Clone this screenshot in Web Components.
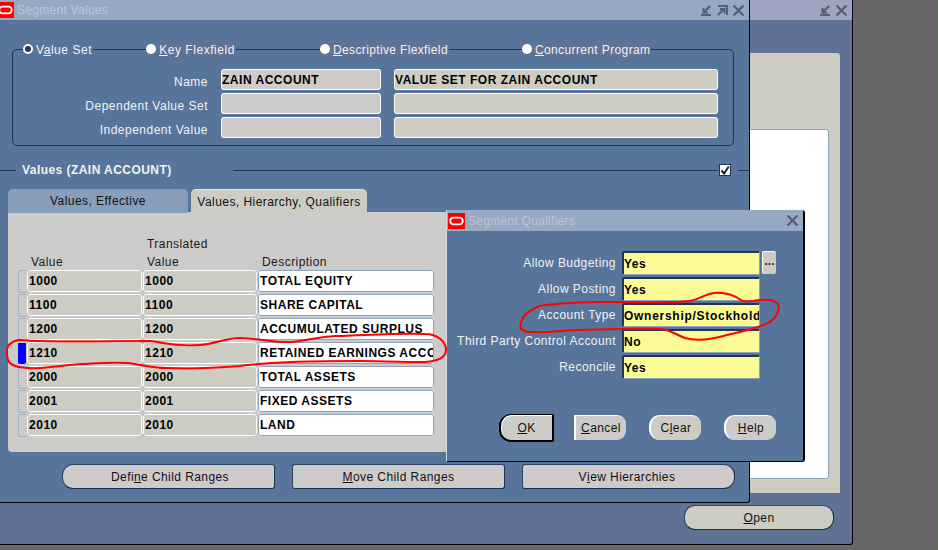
<!DOCTYPE html>
<html>
<head>
<meta charset="utf-8">
<title>Segment Values</title>
<style>
:root {
  --d-blue: repeating-conic-gradient(#557398 0 25%, #647496 0 50%) 0 0 / 2px 2px;
  --d-gray: repeating-conic-gradient(#cfcfc6 0 25%, #cac9c8 0 50%) 0 0 / 2px 2px;
  --d-title: repeating-conic-gradient(#98aac4 0 25%, #a0a3c0 0 50%) 0 0 / 2px 2px;
  --d-desk: repeating-conic-gradient(#646c62 0 25%, #666466 0 50%) 0 0 / 2px 2px;
  --d-tab: repeating-conic-gradient(#8a9fba 0 25%, #909ab8 0 50%) 0 0 / 2px 2px;
}
html, body { margin: 0; padding: 0; }
body { font: 12px "Liberation Sans", Arial, sans-serif; overflow: hidden; }
u { text-underline-offset: 1px; }
</style>
</head>
<body>
<x-desktop>
  <x-window style="left:-10px;top:0;width:863px;height:545px" closable="min,close">
    <x-back-content></x-back-content>
  </x-window>
  <x-window style="left:-3px;top:0;width:753px;height:503px" heading="Segment Values" closable="min,max,close">
    <x-segment-form></x-segment-form>
  </x-window>
  <x-window style="left:446px;top:210px;width:359px;height:252px" heading="Segment Qualifiers" closable="close" dialog>
    <x-qualifiers></x-qualifiers>
  </x-window>
  <x-ink></x-ink>
</x-desktop>

<script>
// small helper, every element just stamps its own template
function tpl (html) {
  const t = document.createElement('template');
  t.innerHTML = html;
  return t;
}

class Base extends HTMLElement {
  constructor () {
    super();
    this.attachShadow({mode: 'open'});
    this.shadowRoot.appendChild(this.constructor.template.content.cloneNode(true));
  }
}

class XDesktop extends Base {
  static template = tpl(`
  <style>
  :host { display: block; position: relative; width: 938px; height: 550px; overflow: hidden; background: var(--d-desk); }
  </style>
  <slot></slot>`);
}

const ICONS = {
  min: '<svg width="11" height="11" viewBox="0 0 11 11" fill="none" stroke="#555d70" stroke-width="2"><path d="M9 1L3 7M2.5 3v4.5H7M0 10h10"/></svg>',
  max: '<svg width="11" height="11" viewBox="0 0 11 11" fill="none" stroke="#555d70" stroke-width="2"><path d="M1 1h9v9M7 4L1 10M3 4h4.5v4.5"/></svg>',
  close: '<svg width="11" height="11" viewBox="0 0 11 11" fill="none" stroke="#555d70" stroke-width="2.2"><path d="M0.5 0.5l10 10M10.5 0.5l-10 10"/></svg>'
};

class XWindow extends Base {
  static template = tpl(`
  <style>
  :host {
    position: absolute; display: flex; flex-direction: column; box-sizing: border-box;
    background: var(--d-blue); border-right: 1px solid #000; border-bottom: 1px solid #000;
    border-bottom-right-radius: 3px;
  }
  :host([dialog]) { border-right: 2px solid #000; border-left: 1px solid #d4dae4; border-top-right-radius: 3px; }
  #bar { flex: none; height: 20px; display: flex; align-items: center; background: var(--d-title); color: #bcc3d4; letter-spacing: .28px; }
  :host([dialog]) #bar { height: 21px; }
  :host([dialog]) #heading { padding-top: 1px; }
  #logo { flex: none; margin-right: 3px; }
  :host([dialog]) #logo { margin-left: 1px; }
  #heading { flex: 1; white-space: nowrap; }
  #icons { display: flex; gap: 5px; margin-right: 5px; }
  #body { flex: 1; min-height: 0; }
  </style>
  <div id="bar">
    <svg id="logo" width="17" height="16" viewBox="0 0 17 16"><rect width="17" height="16" fill="#f00"/><rect x="2.2" y="4.7" width="12.6" height="6.6" rx="3.3" fill="none" stroke="#fff" stroke-width="1.8"/></svg>
    <span id="heading"></span>
    <span id="icons"></span>
  </div>
  <div id="body"><slot></slot></div>`);
  connectedCallback () {
    const r = this.shadowRoot;
    const h = this.getAttribute('heading');
    if (h) r.getElementById('heading').textContent = h;
    else r.getElementById('logo').style.visibility = 'hidden';
    r.getElementById('icons').innerHTML = this.getAttribute('closable').split(',').map((k) => ICONS[k]).join('');
  }
}

class XBackContent extends Base {
  static template = tpl(`
  <style>
  :host { display: flex; flex-direction: column; height: 100%; padding-top: 33px; box-sizing: border-box; }
  #panel { height: 440px; margin-right: 12px; background: var(--d-gray); border-radius: 0 3px 0 0; padding: 77px 12px 15px 0; box-sizing: border-box; }
  #white { height: 100%; background: #fff; border-radius: 0 2px 2px 0; box-shadow: 0 0 0 1px #8ea6bd; }
  #row { display: flex; justify-content: flex-end; padding: 12px 18px 0 0; }
  </style>
  <div id="panel"><div id="white"></div></div>
  <div id="row"><x-button style="width:150px;height:25px" kind="both"><u>O</u>pen</x-button></div>`);
}

class XButton extends Base {
  static template = tpl(`
  <style>
  :host {
    display: flex; align-items: center; justify-content: center; box-sizing: border-box; flex: none;
    background: var(--d-gray); color: #111; letter-spacing: .42px; white-space: nowrap;
    border: 1px solid #1c3250; border-top-color: #2b4464; border-left-color: #2b4464;
    border-radius: 3px;
  }
  :host([kind=left]) { border-radius: 11px 3px 3px 11px; padding-left: 3px; }
  :host([kind=right]) { border-radius: 3px 11px 11px 3px; padding-right: 3px; }
  :host([kind=both]) { border-radius: 11px; }
  :host([raised]) { border: none; border-top: 1px solid #fff; border-left: 2px solid #fff; border-radius: 11px 9px 9px 11px; }
  :host([square]) { border-radius: 0 9px 9px 0; }
  :host([default]) { border: 1px solid #000; border-right-width: 2px; border-bottom-width: 2px; border-left: 2px solid #000; border-radius: 12px 2px 2px 12px; box-shadow: inset 1px 1px 0 #fff; }
  </style>
  <slot></slot>`);
}

class XRadio extends Base {
  static template = tpl(`
  <style>
  :host { display: inline-flex; align-items: center; flex: none; background: var(--d-blue); color: #f2f2f2; letter-spacing: .55px; height: 16px; white-space: nowrap; padding-right: 1px; }
  #dot { width: 10px; height: 10px; border-radius: 50%; background: #fff; margin-right: 3px; margin-top: -3px; box-sizing: border-box; }
  :host([checked]) #dot { background: #243a58; border: 2px solid #fff; }
  </style>
  <span id="dot"></span><span><slot></slot></span>`);
}

class XField extends Base {
  static template = tpl(`
  <style>
  :host { display: block; box-sizing: border-box; background: #8fa2bb; border-radius: 2px; height: 100%; font-weight: bold; color: #000; letter-spacing: .52px; }
  #in { box-sizing: border-box; height: 100%; display: flex; align-items: center; padding: 0 var(--pad, 1px); overflow: hidden; white-space: nowrap;
    background: var(--d-gray); border: 1px solid #fff; border-radius: 3px; }
  :host([white]) #in { background: #fff; border-color: #8fa2bb; }
  :host([white]) { background: #fff; }
  :host([yellow]) #in { background: repeating-conic-gradient(#ffff9a 0 25%, #fdf49c 0 50%) 0 0 / 2px 2px; border: 1px solid #8fa2bb; border-top: 2px solid #1f3552; border-left: 2px solid #1f3552; border-radius: 2px; padding: 0; }
  </style>
  <div id="in"><slot></slot></div>`);
}

class XSegmentForm extends Base {
  static template = tpl(`
  <style>
  :host { display: block; padding: 29px 0 0 3px; color: #f2f2f2; letter-spacing: .5px; }
  #group { box-sizing: border-box; width: 722px; height: 97px; margin-left: 12px; border: 1px solid #1f3552; border-radius: 5px; }
  #legend { display: flex; height: 16px; margin-top: -8px; padding-left: 10px; }
  #legend x-radio:nth-child(1) { margin-right: 53px; }
  #legend x-radio:nth-child(2) { margin-right: 84px; }
  #legend x-radio:nth-child(3) { margin-right: 73px; letter-spacing: .36px; }
  #legend x-radio:nth-child(4) { letter-spacing: .38px; }
  #top { display: grid; grid-template-columns: 194px 160px 324px; grid-auto-rows: 21px; column-gap: 13px; row-gap: 3px; margin: 11px 0 0 1px; --pad: 0px; }
  #top label { text-align: right; line-height: 26px; }
  #values { display: flex; align-items: center; height: 18px; margin-top: 15px; font-weight: bold; }
  #values i { display: block; height: 1px; background: #1f3552; }
  #values b { margin: 0 6px; width: 205px; letter-spacing: .45px; }
  #values svg { margin: 0 7px 0 1px; }
  #tabs { display: flex; gap: 3px; margin: 10px 0 -1px 8px; height: 24px; color: #111; position: relative; letter-spacing: .45px; }
  #tabs div { box-sizing: border-box; height: 24px; text-align: center; line-height: 25px; border-radius: 5px 5px 0 0; }
  #t1 { width: 180px; background: var(--d-tab); }
  #t2 { width: 176px; height: 23px !important; background: var(--d-gray); border-top: 1px solid #dfe3ea; z-index: 1; }
  #panel { box-sizing: border-box; width: 734px; height: 240px; margin-left: 8px; padding: 23px 0 0 10px; background: var(--d-gray); color: #1a1a1a; border-radius: 0 0 4px 4px; }
  #grid { display: grid; grid-template-columns: 8px 115px 114px 176px; grid-template-rows: 34px; column-gap: 1px; width: 416px; grid-auto-rows: 24px; }
  #head { grid-column: 1 / -1; display: grid; grid-template-columns: 8px 115px 114px 176px; column-gap: 1px; line-height: 18px; }
  #head span { padding: 0 0 2px 4px; align-self: end; letter-spacing: .45px; }
  .mark { box-sizing: border-box; height: 23px; border: 1px solid #a3b1c4; border-right: none; border-radius: 3px 0 0 3px; margin-top: 1px; }
  .mark.on { background: #0000ff; border: none; border-radius: 0 0 2px 2px; margin-top: 2px; height: 21px; }
  #grid x-field { height: 22px; margin-top: 1px; --pad: 1px; }
  #btns { display: flex; gap: 17px; margin: 12px 0 0 62px; color: #111; }
  </style>
  <div id="group">
    <div id="legend">
      <x-radio checked>V<u>a</u>lue Set</x-radio>
      <x-radio><u>K</u>ey Flexfield</x-radio>
      <x-radio><u>D</u>escriptive Flexfield</x-radio>
      <x-radio><u>C</u>oncurrent Program</x-radio>
    </div>
    <div id="top">
      <label>Name</label><x-field>ZAIN ACCOUNT</x-field><x-field>VALUE SET FOR ZAIN ACCOUNT</x-field>
      <label>Dependent Value Set</label><x-field></x-field><x-field></x-field>
      <label>Independent Value</label><x-field></x-field><x-field></x-field>
    </div>
  </div>
  <div id="values">
    <i style="width:16px"></i><b>Values (ZAIN ACCOUNT)</b><i style="width:485px"></i>
    <svg width="12" height="12" viewBox="0 0 12 12"><rect x=".5" y=".5" width="11" height="11" fill="#fff" stroke="#1f3552"/><path d="M2.5 6.5L5 9.5L9.8 2.5" fill="none" stroke="#14243a" stroke-width="2"/></svg>
    <i style="width:11px"></i>
  </div>
  <div id="tabs"><div id="t1">Values, Effective</div><div id="t2">Values, Hierarchy, Qualifiers</div></div>
  <div id="panel"><div id="grid">
    <div id="head"><span></span><span>Value</span><span>Translated<br>Value</span><span>Description</span></div>
    <div class="mark"></div><x-field>1000</x-field><x-field>1000</x-field><x-field white>TOTAL EQUITY</x-field>
    <div class="mark"></div><x-field>1100</x-field><x-field>1100</x-field><x-field white>SHARE CAPITAL</x-field>
    <div class="mark"></div><x-field>1200</x-field><x-field>1200</x-field><x-field white>ACCUMULATED SURPLUS</x-field>
    <div class="mark on"></div><x-field>1210</x-field><x-field>1210</x-field><x-field white>RETAINED EARNINGS ACCOUNT</x-field>
    <div class="mark"></div><x-field>2000</x-field><x-field>2000</x-field><x-field white>TOTAL ASSETS</x-field>
    <div class="mark"></div><x-field>2001</x-field><x-field>2001</x-field><x-field white>FIXED ASSETS</x-field>
    <div class="mark"></div><x-field>2010</x-field><x-field>2010</x-field><x-field white>LAND</x-field>
  </div></div>
  <div id="btns">
    <x-button kind="left" style="width:213px;height:25px">Defi<u>n</u>e Child Ranges</x-button>
    <x-button style="width:213px;height:25px"><u>M</u>ove Child Ranges</x-button>
    <x-button kind="right" style="width:213px;height:25px">V<u>i</u>ew Hierarchies</x-button>
  </div>`);
}

class XQualifiers extends Base {
  static template = tpl(`
  <style>
  :host { display: block; padding: 20px 0 0 0; color: #f2f2f2; letter-spacing: .45px; }
  #form { display: grid; grid-template-columns: 169px 138px 14px; column-gap: 6px; grid-auto-rows: 24px; row-gap: 2px; }
  #form label { grid-column: 1; text-align: right; line-height: 25px; white-space: nowrap; }
  #form x-field { grid-column: 2; height: 24px; }
  #form x-field.long { letter-spacing: .72px; }
  #lov { grid-column: 3; margin-left: -4px; width: 14px; height: 23px; display: flex; align-items: center; justify-content: center; background: var(--d-gray); border-top: 1px solid #fff; border-left: 1px solid #fff; border-radius: 2px; box-sizing: border-box; color: #5a1020; font-weight: bold; line-height: 1; padding-bottom: 4px; letter-spacing: 0; }
  #btns { display: flex; margin: 35px 0 0 52px; color: #111; }
  </style>
  <div id="form">
    <label>Allow Budgeting</label><x-field yellow>Yes</x-field><div id="lov">...</div>
    <label>Allow Posting</label><x-field yellow>Yes</x-field>
    <label>Account Type</label><x-field yellow class="long">Ownership/Stockholder</x-field>
    <label>Third Party Control Account</label><x-field yellow>No</x-field>
    <label>Reconcile</label><x-field yellow>Yes</x-field>
  </div>
  <div id="btns">
    <x-button default style="width:55px;height:28px"><u>O</u>K</x-button>
    <x-button raised square style="width:52px;height:25px;margin:1px 0 0 20px"><u>C</u>ancel</x-button>
    <x-button raised style="width:52px;height:25px;margin:1px 0 0 23px">C<u>l</u>ear</x-button>
    <x-button raised style="width:52px;height:25px;margin:1px 0 0 23px"><u>H</u>elp</x-button>
  </div>`);
}

// hand drawn red marks on top of the shot
class XInk extends Base {
  static template = tpl(`
  <style>
  :host { position: absolute; left: 0; top: 0; width: 938px; height: 550px; pointer-events: none; }
  path { fill: none; stroke: #f00; stroke-width: 2; stroke-linecap: round; stroke-linejoin: round; }
  </style>
  <svg width="938" height="550" viewBox="0 0 938 550">
    <path d="M18 340C60 343 110 341 150 341C165 342 170 347 200 345C215 344 225 338 240 338C265 339 275 343 292 342C310 340 318 337 335 336C370 335 400 333 425 334C438 334 446 342 446 350C446 358 438 361 425 362C400 362 375 361 358 361C330 361 310 361 292 362C270 363 255 364 240 366C215 368 190 369 167 368C150 368 140 364 127 363C105 362 90 364 83 364C65 365 55 367 40 368C22 369 10 366 8 360C6 352 7 345 10 344C12 342 14 341 18 340Z"/>
    <path d="M539 306C530 310 523 315 521 322C519 328 522 332 530 332C550 333 565 330 577 330C610 329 640 328 660 329C672 330 676 335 685 338C695 341 710 340 727 335C745 331 762 327 770 322C778 316 780 308 778 304C775 300 770 299 760 300C750 301 745 303 741 300C735 296 725 292 714 293C705 294 700 299 690 301C675 303 650 302 610 302C585 302 560 303 539 306Z"/>
  </svg>`);
}

customElements.define('x-desktop', XDesktop);
customElements.define('x-window', XWindow);
customElements.define('x-back-content', XBackContent);
customElements.define('x-button', XButton);
customElements.define('x-radio', XRadio);
customElements.define('x-field', XField);
customElements.define('x-segment-form', XSegmentForm);
customElements.define('x-qualifiers', XQualifiers);
customElements.define('x-ink', XInk);
</script>
</body>
</html>
